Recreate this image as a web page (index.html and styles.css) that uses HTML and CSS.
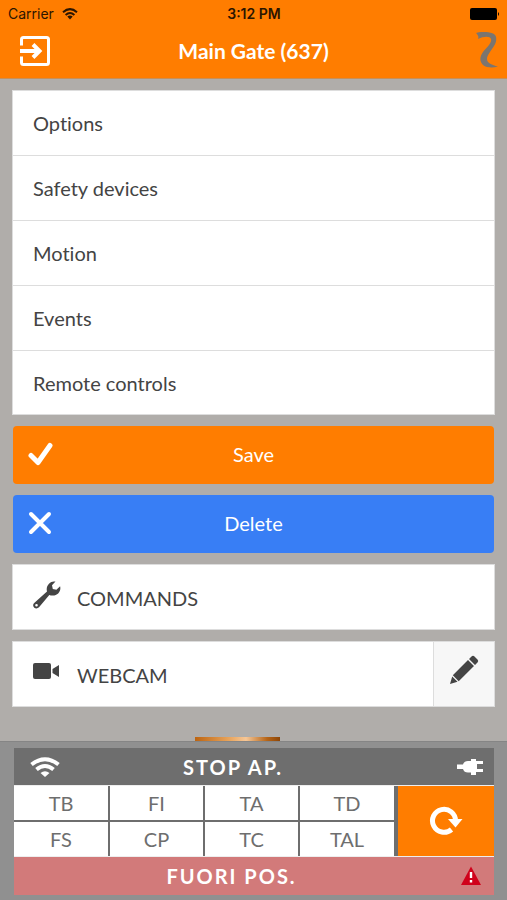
FILE: index.html
```html
<!DOCTYPE html>
<html lang="en">
<head>
<meta charset="utf-8">
<meta name="viewport" content="width=device-width, initial-scale=1">
<title>Main Gate (637)</title>
<link rel="stylesheet" href="styles.css">
</head>
<body>
<header class="header">
  <div class="status">
    <span class="carrier">Carrier
      <svg width="16" height="12" viewBox="0 0 16 12" fill="none" stroke="currentColor" stroke-width="2" aria-hidden="true"><path d="M1 4.2Q8-2 15 4.2M3.6 7Q8 3 12.400 7"/><path d="M5.300 8.500Q8 6.300 10.700 8.500L8 11.500Z" fill="currentColor" stroke="none"/></svg>
    </span>
    <span class="clock">3:12 PM</span>
    <svg class="battery" width="30" height="12" viewBox="0 0 30 12" aria-hidden="true"><rect width="27" height="12" rx="2"/><path d="M28 4Q30 6 28 8Z"/></svg>
  </div>
  <div class="titlebar">
    <button class="back" type="button" aria-label="Exit">
      <svg width="30" height="30" viewBox="0 0 30 30" fill="none" stroke="currentColor" stroke-width="3" stroke-linejoin="round" aria-hidden="true"><path d="M1.500 9.500V3.500q0-2 2-2h23q2 0 2 2v23q0 2-2 2h-23q-2 0-2-2v-6"/><path d="M0 15h19M13 8.500l6.500 6.500-6.500 6.500" stroke-width="4" stroke-linejoin="miter"/></svg>
    </button>
    <h1 class="title">Main Gate (637)</h1>
    <svg class="brand" width="24" height="36" viewBox="0 0 24 36" aria-hidden="true"><path d="M1 1C8-1 15 0 19 2C22 4 22 9 19 14C16 19 12 23 12 27C12 31 17 33 23 34.500C18 36 12 36 8 33C4 29 5 24 8 20C12 15 17 11 16 7C15 4 9 4 3 7C4 5 3 3 1 1Z"/></svg>
  </div>
</header>

<main class="content">
  <nav class="card menu" aria-label="Settings">
    <a class="row" href="#options">Options</a>
    <a class="row" href="#safety">Safety devices</a>
    <a class="row" href="#motion">Motion</a>
    <a class="row" href="#events">Events</a>
    <a class="row" href="#remotes">Remote controls</a>
  </nav>
  <button class="action save" type="button">
    <svg width="26" height="24" viewBox="0 0 26 24" fill="none" stroke="currentColor" stroke-width="5" stroke-linecap="round" stroke-linejoin="round" aria-hidden="true"><path d="M3 13.500l7 7L22 3.500"/></svg>
    <span>Save</span>
  </button>
  <button class="action delete" type="button">
    <svg width="26" height="24" viewBox="0 0 26 24" fill="none" stroke="currentColor" stroke-width="4" stroke-linecap="round" aria-hidden="true"><path d="M3 3l18 18M21 3L3 21"/></svg>
    <span>Delete</span>
  </button>
  <div class="card panel">
    <a class="panel-link" href="#commands">
      <svg class="panel-icon" width="28" height="28" viewBox="0 0 28 28" aria-hidden="true"><path fill-rule="evenodd" d="M22.500.6L19 4.300l.8 3.700 3.600.8 3.700-3.600c1.300 4.800-2.300 9.500-7.500 9.400-1.400 0-2.300-.2-3.300-.6L6 26.300c-1.300 1.400-3.400 1.500-4.700.4-1.500-1.300-1.600-3.300-.1-4.700L14 10.500c-.8-3 0-5.700 2-7.800 2-2 4-2.700 6.500-2.100ZM3.500 22.900a1.300 1.300 0 1 0 0 2.600 1.300 1.300 0 0 0 0-2.600Z"/></svg>
      <span>COMMANDS</span>
    </a>
  </div>
  <div class="card panel">
    <a class="panel-link" href="#webcam">
      <svg class="panel-icon" width="28" height="28" viewBox="0 0 28 28" aria-hidden="true"><rect y="5" width="18" height="16" rx="2"/><path d="M19.500 11L26 7v12l-6.500-4Z"/></svg>
      <span>WEBCAM</span>
    </a>
    <button class="edit" type="button" aria-label="Edit webcam">
      <svg width="30" height="30" viewBox="0 0 30 30" aria-hidden="true"><path d="M1 29l2.200-7.500 5.300 5.300ZM3.800 20.300L19 5l6 6L9.700 26.200ZM20 4l2.500-2.500q1.500-1.300 3 0l3 3q1.500 1.500 0 3l-2.500 2.500Z"/></svg>
    </button>
  </div>
  <div class="preview"></div>
</main>

<footer class="monitor">
  <div class="bar state">
    <svg width="30" height="20" viewBox="0 0 30 20" fill="none" stroke="currentColor" stroke-width="4" aria-hidden="true"><path d="M1.500 7.500Q15-3 28.500 7.500M6.500 12.500Q15 5.500 23.500 12.500"/><path d="M10.500 16Q15 12.500 19.500 16L15 20Z" fill="currentColor" stroke="none"/></svg>
    <span class="bar-text">STOP AP.</span>
    <svg class="end" width="28" height="18" viewBox="0 0 28 18" fill="currentColor" aria-hidden="true"><path d="M1 6.500h6q1-3.500 5-3.500h3V1h5v2h7v3h-6v5h6v3h-7v3h-5v-2.500h-3q-4 0-5-3.500H1Z"/></svg>
  </div>
  <div class="signals">
    <table class="grid">
      <tr><td>TB</td><td>FI</td><td>TA</td><td>TD</td></tr>
      <tr><td>FS</td><td>CP</td><td>TC</td><td>TAL</td></tr>
    </table>
    <button class="refresh" type="button" aria-label="Refresh">
      <svg width="34" height="30" viewBox="0 0 34 30" aria-hidden="true"><path d="M22.500 23.500A11.500 11.500 0 1 1 26.500 15" fill="none" stroke="currentColor" stroke-width="5"/><path d="M19 13h14.500l-7 8.500Z" fill="currentColor"/></svg>
    </button>
  </div>
  <div class="bar alarm">
    <span></span>
    <span class="bar-text">FUORI POS.</span>
    <svg class="end" width="20" height="20" viewBox="0 0 20 20" aria-hidden="true"><path d="M10 .5L20 19H0Z" fill="#d0021b"/><path d="M10 6v6M10 14v2.500" stroke="#fff" stroke-width="2.400"/></svg>
  </div>
</footer>
</body>
</html>
```
FILE: styles.css
```css
* {
  box-sizing: border-box;
}

body {
  margin: 0;
  height: 100vh;
  display: flex;
  flex-direction: column;
  overflow: hidden;
  background: #b0adaa;
  color: #444;
  font: 20px/24px Lato, "Liberation Sans", sans-serif;
  font-variant-ligatures: none;
}

button {
  border: 0;
  padding: 0;
  background: none;
  color: inherit;
  font: inherit;
}

a {
  color: inherit;
  text-decoration: none;
}

svg {
  display: block;
}

.header {
  flex: none;
  background: #ff7d00;
  border-bottom: 1px solid #c98f56;
}

.status {
  display: grid;
  grid-template-columns: 1fr auto 1fr;
  align-items: center;
  padding: 4px 7px 0 8px;
  color: #2b1500;
  font: 14px/20px Inter, Roboto, sans-serif;
}

.carrier {
  display: flex;
  align-items: center;
  gap: 8px;
}

.clock {
  font-weight: 600;
}

.battery {
  justify-self: end;
  fill: #000;
}

.titlebar {
  display: grid;
  grid-template-columns: 1fr auto 1fr;
  align-items: center;
  height: 54px;
  padding: 0 8px;
  color: #fff;
}

.title {
  margin: 0;
  font-size: 21px;
  line-height: 24px;
}

.back {
  justify-self: start;
  margin-left: 12px;
}

.brand {
  justify-self: end;
  align-self: start;
  margin-top: 8px;
  fill: #7b756f;
}

.content {
  flex: 1;
  min-height: 0;
  display: flex;
  flex-direction: column;
  gap: 11px;
  padding: 11px 12px 0;
}

.content > * {
  flex: none;
}

.card {
  background: #fff;
  border: 1px solid #ddd;
}

.row {
  display: flex;
  align-items: center;
  height: 65px;
  padding: 0 20px;
}

.row + .row {
  border-top: 1px solid #ddd;
}

.menu .row:first-child,
.menu .row:last-child {
  height: 64px;
}

.action {
  display: grid;
  grid-template-columns: 1fr auto 1fr;
  align-items: center;
  height: 58px;
  margin: 0 1px;
  padding: 0 15px 2px;
  border-radius: 4px;
  color: #fff;
}

.save {
  background: #ff7d00;
}

.delete {
  background: #387ef5;
}

.panel {
  display: flex;
  height: 66px;
}

.panel-link {
  flex: 1;
  display: flex;
  align-items: center;
  gap: 16px;
  padding: 2px 20px 0;
}

.panel-icon {
  margin-bottom: 6px;
  fill: #444;
}

.edit {
  display: grid;
  place-items: center;
  width: 61px;
  padding-bottom: 8px;
  background: #f7f7f7;
  border-left: 1px solid #ddd;
  fill: #444;
}

.preview {
  align-self: center;
  width: 85px;
  height: 64px;
  margin: 19px 32px 0 0;
  background: linear-gradient(90deg, #bd6410, #e8a45c 40%, #f6c797 60%, #b56417 85%, #8d4608);
}

.monitor {
  position: relative;
  flex: none;
  padding: 6px 13px 5px 14px;
  background: #909090;
  border-top: 1px solid #858585;
}

.bar {
  display: grid;
  grid-template-columns: 30px 1fr 78px;
  align-items: center;
  height: 37px;
  padding: 0 10px 0 16px;
  color: #fff;
}

.bar-text {
  font-weight: 700;
  letter-spacing: 2px;
  text-align: center;
}

.end {
  justify-self: end;
}

.state {
  background: #6e6e6e;
}

.alarm {
  height: 38px;
  padding-right: 13px;
  background: #d27a7a;
}

.signals {
  display: flex;
  gap: 4px;
  background: #6e6e6e;
  border-top: 1px solid #eee;
  border-bottom: 1px solid #eee;
}

.grid {
  flex: 1;
  width: 100%;
  table-layout: fixed;
  border-collapse: collapse;
  color: #6e6e6e;
}

.grid td {
  height: 35px;
  padding: 0;
  background: #fff;
  text-align: center;
}

.grid td + td {
  border-left: 2px solid #6e6e6e;
}

.grid tr + tr td {
  border-top: 2px solid #6e6e6e;
}

.refresh {
  flex: none;
  display: grid;
  place-items: center;
  width: 96px;
  background: #ff7d00;
  color: #fff;
}
```
